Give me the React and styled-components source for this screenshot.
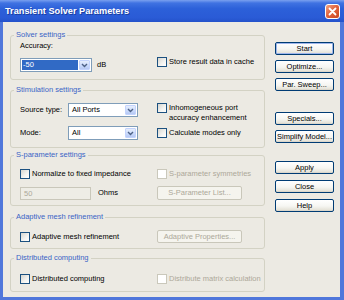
import React from 'react';
import styled, { createGlobalStyle } from 'styled-components';

const GlobalStyle = createGlobalStyle`
  html, body { margin: 0; padding: 0; background: #ffffff; }
  body { font-family: "Liberation Sans", Arial, sans-serif; }
`;

const Window = styled.div`
  width: 344px;
  height: 300px;
  display: flex;
  flex-direction: column;
  background: #5077db;
  overflow: hidden;
`;

const TitleBar = styled.div`
  height: 22px;
  flex: none;
  display: flex;
  align-items: center;
  justify-content: space-between;
  padding: 0 4px 0 5px;
  background: linear-gradient(180deg, #7aa0ef 0%, #3f72e2 14%, #2c60d9 40%, #2a5bd6 80%, #2452cb 100%);
`;

const Title = styled.div`
  color: #ffffff;
  font-weight: bold;
  font-size: 9.2px;
  text-shadow: 1px 1px 0 #1b3d9e;
`;

const CloseBox = styled.div`
  width: 15px;
  height: 15px;
  box-sizing: border-box;
  border: 1px solid #ffffff;
  border-radius: 3px;
  background: linear-gradient(135deg, #f2a585 0%, #e2653f 45%, #c9461f 100%);
  display: flex;
  align-items: center;
  justify-content: center;
`;

const Frame = styled.div`
  flex: 1;
  display: flex;
  padding: 0 4px 3px 3px;
`;

const Body = styled.div`
  flex: 1;
  display: flex;
  gap: 10px;
  padding: 8px 6px 0 7px;
  background: #eceae3;
  font-size: 7.5px;
  color: #000000;
`;

const LeftCol = styled.div`
  width: 255px;
  flex: none;
  display: flex;
  flex-direction: column;
`;

const Group = styled.fieldset`
  margin: ${p => p.$mt || 0}px 0 0;
  padding: 0;
  height: ${p => p.$h}px;
  box-sizing: border-box;
  border: 1px solid #d3d2c4;
  border-radius: 3px;
  min-width: 0;
`;

const Legend = styled.legend`
  margin-left: 3px;
  padding: 0 2px;
  line-height: 10px;
  color: #3a64c6;
`;

const GroupBody = styled.div`
  padding: 0 9px;
  display: flex;
  flex-direction: column;
`;

const Row = styled.div`
  display: flex;
  align-items: ${p => p.$align || 'center'};
  margin-top: ${p => p.$mt || 0}px;
`;

const LeftCell = styled.div`
  width: 137px;
  flex: none;
  display: flex;
  flex-direction: ${p => p.$column ? 'column' : 'row'};
  align-items: ${p => p.$column ? 'flex-start' : 'center'};
`;

const RightCell = styled.div`
  flex: 1;
  display: flex;
  flex-direction: column;
  padding-top: ${p => p.$pt || 0}px;
`;

const Caption = styled.div`
  line-height: 10px;
  width: ${p => p.$w ? `${p.$w}px` : 'auto'};
  flex: none;
`;

const Unit = styled.span`
  line-height: 10px;
  margin-left: ${p => p.$ml}px;
`;

const ComboFrame = styled.div`
  width: ${p => p.$w}px;
  height: 14px;
  box-sizing: border-box;
  border: 1px solid #7f9db9;
  background: #ffffff;
  display: flex;
  padding: 1px;
  gap: 1px;
  margin-top: ${p => p.$mt || 0}px;
`;

const ComboText = styled.div`
  flex: 1;
  line-height: 10px;
  padding-left: ${p => p.$selected ? 1 : 2}px;
  background: ${p => p.$selected ? '#316ac5' : 'transparent'};
  color: ${p => p.$selected ? '#ffffff' : '#000000'};
`;

const ComboButton = styled.div`
  width: 11px;
  box-sizing: border-box;
  border: 1px solid #c3d3fd;
  border-radius: 1px;
  background: linear-gradient(180deg, #e6eefc 0%, #c9d9fb 60%, #b5c8f3 100%);
  display: flex;
  align-items: center;
  justify-content: center;
`;

const TextInput = styled.div`
  width: ${p => p.$w}px;
  height: 13px;
  box-sizing: border-box;
  border: 1px solid #c9c7ba;
  background: #eeede6;
  color: #aca899;
  line-height: 11px;
  padding-left: 3px;
`;

const CheckLabel = styled.div`
  display: flex;
  align-items: flex-start;
  gap: 2px;
  color: ${p => p.$disabled ? '#aca899' : '#000000'};
  margin-top: ${p => p.$mt || 0}px;
`;

const Box = styled.span`
  width: 10px;
  height: 10px;
  flex: none;
  box-sizing: border-box;
  border: 1px solid ${p => p.$disabled ? '#cac8bb' : '#1c5180'};
  background: ${p => p.$disabled ? '#ffffff' : 'linear-gradient(135deg, #d6d5cf 0%, #f4f4f1 60%, #ffffff 100%)'};
`;

const CheckText = styled.span`
  line-height: 10px;
  white-space: nowrap;
`;

const ButtonCol = styled.div`
  width: 59px;
  flex: none;
  display: flex;
  flex-direction: column;
  padding-top: 12px;
`;

const Button = styled.div`
  width: ${p => p.$w ? `${p.$w}px` : 'auto'};
  height: ${p => p.$h || 13}px;
  box-sizing: border-box;
  margin-top: ${p => p.$mt || 0}px;
  border: 1px solid ${p => p.$disabled ? '#c9c7ba' : '#003c74'};
  border-radius: 2px;
  background: ${p => p.$disabled
    ? '#f5f4ee'
    : 'linear-gradient(180deg, #ffffff 0%, #f6f6f2 55%, #e6e4da 88%, #d4cfc4 100%)'};
  box-shadow: ${p => p.$default ? 'inset 0 0 0 1px #9fb6ec' : 'none'};
  color: ${p => p.$disabled ? '#aca899' : '#000000'};
  line-height: ${p => (p.$h || 13) - 2}px;
  text-align: center;
  white-space: nowrap;
`;

const Chevron = () => (
  <svg width="7" height="5" viewBox="0 0 7 5">
    <path d="M1 1 L3.5 3.5 L6 1" fill="none" stroke="#4d6185" strokeWidth="1.4" />
  </svg>
);

const Combo = ({ w, value, selected, mt }) => (
  <ComboFrame $w={w} $mt={mt}>
    <ComboText $selected={selected}>{value}</ComboText>
    <ComboButton><Chevron /></ComboButton>
  </ComboFrame>
);

const Check = ({ children, disabled, mt }) => (
  <CheckLabel $disabled={disabled} $mt={mt}>
    <Box $disabled={disabled} />
    <CheckText>{children}</CheckText>
  </CheckLabel>
);

export default function App() {
  return (
    <>
      <GlobalStyle />
      <Window>
        <TitleBar>
          <Title>Transient Solver Parameters</Title>
          <CloseBox>
            <svg width="9" height="9" viewBox="0 0 9 9">
              <path d="M1.5 1.5 L7.5 7.5 M7.5 1.5 L1.5 7.5" stroke="#ffffff" strokeWidth="1.8" strokeLinecap="round" />
            </svg>
          </CloseBox>
        </TitleBar>
        <Frame>
          <Body>
            <LeftCol>
              <Group $h={50}>
                <Legend>Solver settings</Legend>
                <GroupBody>
                  <Row $align="flex-start" $mt={1}>
                    <LeftCell $column>
                      <Caption>Accuracy:</Caption>
                      <Row $mt={7}>
                        <Combo w={72} value="-50" selected />
                        <Unit $ml={5}>dB</Unit>
                      </Row>
                    </LeftCell>
                    <RightCell $pt={16}>
                      <Check>Store result data in cache</Check>
                    </RightCell>
                  </Row>
                </GroupBody>
              </Group>

              <Group $h={63} $mt={5}>
                <Legend>Stimulation settings</Legend>
                <GroupBody>
                  <Row $align="flex-start" $mt={8}>
                    <LeftCell>
                      <Caption $w={48}>Source type:</Caption>
                      <Combo w={70} value="All Ports" />
                    </LeftCell>
                    <RightCell>
                      <Check>Inhomogeneous port<br />accuracy enhancement</Check>
                    </RightCell>
                  </Row>
                  <Row $mt={3}>
                    <LeftCell>
                      <Caption $w={48}>Mode:</Caption>
                      <Combo w={70} value="All" />
                    </LeftCell>
                    <RightCell>
                      <Check>Calculate modes only</Check>
                    </RightCell>
                  </Row>
                </GroupBody>
              </Group>

              <Group $h={56} $mt={2}>
                <Legend>S-parameter settings</Legend>
                <GroupBody>
                  <Row $mt={9}>
                    <LeftCell>
                      <Check>Normalize to fixed impedance</Check>
                    </LeftCell>
                    <RightCell>
                      <Check disabled>S-parameter symmetries</Check>
                    </RightCell>
                  </Row>
                  <Row $mt={7}>
                    <LeftCell>
                      <TextInput $w={71}>50</TextInput>
                      <Unit $ml={7}>Ohms</Unit>
                    </LeftCell>
                    <RightCell>
                      <Button $w={85} $h={14} $disabled>S-Parameter List...</Button>
                    </RightCell>
                  </Row>
                </GroupBody>
              </Group>

              <Group $h={37} $mt={6}>
                <Legend>Adaptive mesh refinement</Legend>
                <GroupBody>
                  <Row $mt={8}>
                    <LeftCell>
                      <Check>Adaptive mesh refinement</Check>
                    </LeftCell>
                    <RightCell>
                      <Button $w={85} $h={13} $disabled>Adaptive Properties...</Button>
                    </RightCell>
                  </Row>
                </GroupBody>
              </Group>

              <Group $h={39} $mt={4}>
                <Legend>Distributed computing</Legend>
                <GroupBody>
                  <Row $mt={11}>
                    <LeftCell>
                      <Check>Distributed computing</Check>
                    </LeftCell>
                    <RightCell>
                      <Check disabled>Distribute matrix calculation</Check>
                    </RightCell>
                  </Row>
                </GroupBody>
              </Group>
            </LeftCol>

            <ButtonCol>
              <Button $default>Start</Button>
              <Button $mt={5}>Optimize...</Button>
              <Button $mt={5}>Par. Sweep...</Button>
              <Button $mt={21}>Specials...</Button>
              <Button $mt={5}>Simplify Model...</Button>
              <Button $mt={18}>Apply</Button>
              <Button $mt={6}>Close</Button>
              <Button $mt={6}>Help</Button>
            </ButtonCol>
          </Body>
        </Frame>
      </Window>
    </>
  );
}
